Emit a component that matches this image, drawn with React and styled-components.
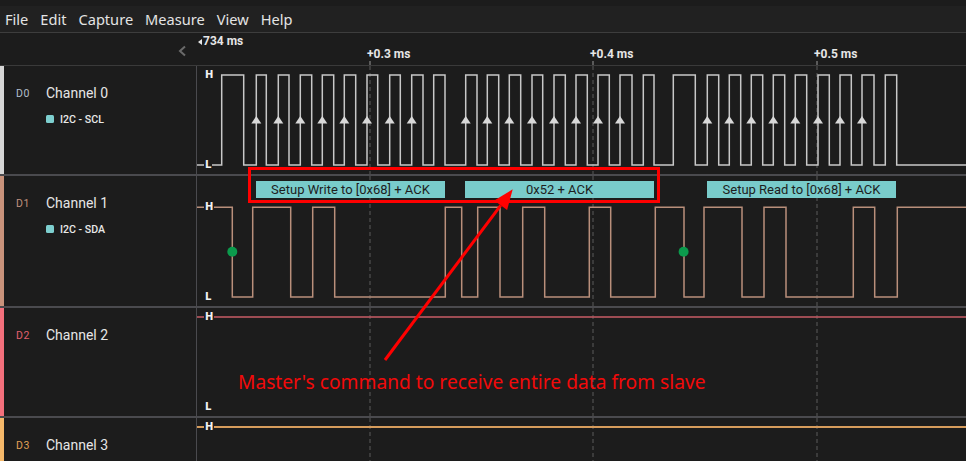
import React from "react";
import styled, { createGlobalStyle } from "styled-components";

const GlobalStyle = createGlobalStyle`
  html, body {
    margin: 0;
    padding: 0;
    background: #1c1c1c;
  }
  body {
    width: 966px;
    height: 461px;
    overflow: hidden;
    font-family: Roboto, "Noto Sans", sans-serif;
  }
`;

const Window = styled.div`
  width: 966px;
  height: 461px;
  display: flex;
  flex-direction: column;
  background: #1c1c1c;
  overflow: hidden;
`;

const MenuBar = styled.div`
  height: 26px;
  margin-top: 6px;
  display: flex;
  align-items: center;
  gap: 12px;
  padding-left: 5px;
  background: #212121;
  border-bottom: 1px solid #3d3d3d;
  font-family: "Noto Sans", sans-serif;
  font-size: 14.6px;
  color: #e4e4e4;
  flex-shrink: 0;
`;

const MenuItem = styled.span`
  line-height: 26px;
`;

const Ruler = styled.div`
  height: 32px;
  display: flex;
  border-bottom: 1px solid #3a3a3a;
  flex-shrink: 0;
`;

const RulerSide = styled.div`
  width: 197px;
  display: flex;
  justify-content: flex-end;
  align-items: center;
  padding: 4px 10px 0 0;
  box-sizing: border-box;
`;

const RulerTrack = styled.div`
  position: relative;
  flex: 1;
  font-weight: 700;
  font-size: 12px;
  color: #e6e6e6;
`;

const Offset = styled.div`
  position: absolute;
  left: 1px;
  top: 1px;
  display: flex;
  align-items: center;
  gap: 1px;
  line-height: 15px;
`;

const TickLabel = styled.span`
  position: absolute;
  top: 14px;
  line-height: 15px;
`;

const TickMark = styled.span`
  position: absolute;
  bottom: 0;
  width: 2px;
  height: 4px;
  background: #5a5a5a;
`;

const Channels = styled.div`
  position: relative;
  flex: 1;
  display: flex;
  flex-direction: column;
`;

const Row = styled.div`
  display: flex;
  height: ${(p) => p.$h}px;
  border-bottom: 2px solid #4a4a4e;
  flex-shrink: 0;
`;

const Label = styled.div`
  width: 180px;
  flex-shrink: 0;
  border-left: 4px solid ${(p) => p.$bar};
  border-right: 1px solid #4a4a4e;
  padding: 19px 0 0 12px;
`;

const Header = styled.div`
  display: flex;
  align-items: center;
  height: 16px;
`;

const ChannelId = styled.span`
  width: 30px;
  font-size: 10.5px;
  letter-spacing: 0.6px;
  color: ${(p) => p.$color};
`;

const ChannelName = styled.span`
  font-size: 14px;
  color: #e6e6e6;
`;

const Tag = styled.div`
  display: flex;
  align-items: center;
  margin: 12px 0 0 30px;
  height: 12px;
  font-size: 10.6px;
  font-weight: 500;
  color: #e8e8e8;
`;

const Chip = styled.span`
  width: 8px;
  height: 8px;
  border-radius: 1.5px;
  background: #7dcfcf;
  margin-right: 6px;
`;

const Wave = styled.div`
  position: relative;
  flex: 1;
  overflow: hidden;
`;

const WaveSvg = styled.svg`
  position: absolute;
  left: 0;
  top: 0;
`;

const Level = styled.span`
  position: absolute;
  left: 7px;
  font-family: "DejaVu Sans", sans-serif;
  font-size: 10px;
  font-weight: 700;
  line-height: 10px;
  padding: 0 1px;
  background: #1c1c1c;
  color: #f2f2f2;
`;

const Decode = styled.div`
  position: absolute;
  top: 5px;
  height: 17px;
  background: #79cccb;
  color: #1e1e1e;
  font-size: 13px;
  line-height: 17px;
  text-align: center;
`;

const RedBox = styled.div`
  position: absolute;
  left: 248px;
  top: 101px;
  width: 412px;
  height: 36px;
  border: 3px solid #ff0000;
  box-sizing: border-box;
`;

const Overlay = styled.svg`
  position: absolute;
  left: 0;
  top: 0;
  pointer-events: none;
`;

const Note = styled.span`
  position: absolute;
  left: 238px;
  top: 302px;
  font-family: "Noto Sans", sans-serif;
  font-size: 19.2px;
  color: #f20a0a;
  white-space: nowrap;
`;

const X0 = 197;
const W = 769;
const GRID = [370, 593, 817];

const wavePath = (edges, startHigh, hi, lo) => {
  let y = startHigh ? hi : lo;
  let d = `M${X0} ${y}`;
  edges.forEach((x) => {
    d += ` H${x}`;
    y = y === hi ? lo : hi;
    d += ` V${y}`;
  });
  return d + ` H${X0 + W}`;
};

const sclEdges = [
  221.7, 243.7, 256.3, 266.3, 278.3, 289, 300.3, 311.7, 322.3, 333.7, 344.3,
  355.7, 367, 377.7, 389.7, 400.3, 411.7, 423, 433.7, 445, 465.7, 477, 487.3,
  498.7, 509.3, 520.7, 532, 542.7, 554, 565.3, 576, 587.3, 598, 609.3, 620,
  632, 643.3, 654, 673.3, 695.3, 707.3, 718.7, 729.3, 740.7, 751.3, 762.7,
  773.3, 784.7, 795.3, 806.7, 818, 829.3, 840, 851.3, 862, 874, 885.3, 896.7,
];

const sclArrows = [
  256.3, 278.3, 300.3, 322.3, 344.3, 367, 389.7, 411.7, 465.7, 487.3, 509.3,
  532, 554, 576, 598, 620, 707.3, 729.3, 751.3, 773.3, 795.3, 818, 840, 862,
];

const sdaEdges = [
  232.3, 252.7, 290.7, 312.7, 334.7, 445.3, 461.7, 477.7, 500, 522.7, 544.7,
  589.3, 610.7, 655.3, 684, 704, 742, 764, 786, 853.3, 874.7, 897.3,
];

const decodes = [
  { left: 256, width: 189, text: "Setup Write to [0x68] + ACK" },
  { left: 465, width: 189, text: "0x52 + ACK" },
  { left: 707, width: 189, text: "Setup Read to [0x68] + ACK" },
];

const Grid = ({ h }) =>
  GRID.map((x) => (
    <line
      key={x}
      x1={x}
      x2={x}
      y1={0}
      y2={h}
      stroke="#464646"
      strokeWidth="1.5"
      strokeDasharray="4 3"
    />
  ));

const Channel = ({ id, name, color, bar, tag, h, levels, children, extra }) => (
  <Row $h={h}>
    <Label $bar={bar}>
      <Header>
        <ChannelId $color={color}>{id}</ChannelId>
        <ChannelName>{name}</ChannelName>
      </Header>
      {tag && (
        <Tag>
          <Chip />
          {tag}
        </Tag>
      )}
    </Label>
    <Wave>
      <WaveSvg width={W} height={h} viewBox={`${X0} 0 ${W} ${h}`}>
        <Grid h={h} />
        {children}
      </WaveSvg>
      {extra}
      {levels.map(([t, y]) => (
        <Level key={t} style={{ top: y - 5 }}>
          {t}
        </Level>
      ))}
    </Wave>
  </Row>
);

export default function App() {
  return (
    <Window>
      <GlobalStyle />
      <MenuBar>
        {["File", "Edit", "Capture", "Measure", "View", "Help"].map((m) => (
          <MenuItem key={m}>{m}</MenuItem>
        ))}
      </MenuBar>
      <Ruler>
        <RulerSide>
          <svg width="10" height="12" viewBox="0 0 10 12">
            <polyline
              points="8,1.5 3,6 8,10.5"
              fill="none"
              stroke="#6a6a6a"
              strokeWidth="2"
            />
          </svg>
        </RulerSide>
        <RulerTrack>
          <Offset>
            <svg width="4" height="6" viewBox="0 0 4 6">
              <polygon points="4,0 0,3 4,6" fill="#e6e6e6" />
            </svg>
            734 ms
          </Offset>
          {GRID.map((x, i) => (
            <React.Fragment key={x}>
              <TickLabel style={{ left: x - X0 - 3 }}>+0.{i + 3} ms</TickLabel>
              <TickMark style={{ left: x - X0 - 1 }} />
            </React.Fragment>
          ))}
        </RulerTrack>
      </Ruler>
      <Channels>
        <Channel
          id="D0"
          name="Channel 0"
          color="#b3bfcc"
          bar="#d6d6d6"
          tag="I2C - SCL"
          h={108}
          levels={[
            ["H", 9],
            ["L", 99],
          ]}
        >
          <path
            d={wavePath(sclEdges, false, 9, 99)}
            fill="none"
            stroke="#c8c8c8"
            strokeWidth="1.5"
          />
          {sclArrows.map((x) => (
            <polygon
              key={x}
              points={`${x},50 ${x - 5},57.5 ${x + 5},57.5`}
              fill="#d8d8d8"
            />
          ))}
        </Channel>
        <Channel
          id="D1"
          name="Channel 1"
          color="#c0927e"
          bar="#c8927b"
          tag="I2C - SDA"
          h={130}
          levels={[
            ["H", 31],
            ["L", 121],
          ]}
          extra={decodes.map((d) => (
            <Decode key={d.text} style={{ left: d.left - X0, width: d.width }}>
              {d.text}
            </Decode>
          ))}
        >
          <path
            d={wavePath(sdaEdges, true, 31.3, 121)}
            fill="none"
            stroke="#b98f7b"
            strokeWidth="1.5"
          />
          <circle cx="232.3" cy="75.7" r="5" fill="#0b9a4c" />
          <circle cx="683.6" cy="75.7" r="5" fill="#0b9a4c" />
        </Channel>
        <Channel
          id="D2"
          name="Channel 2"
          color="#e0606c"
          bar="#f3707c"
          h={108}
          levels={[
            ["H", 9],
            ["L", 99],
          ]}
        >
          <line x1={X0} x2={X0 + W} y1="9" y2="9" stroke="#c85c66" strokeWidth="1.5" />
        </Channel>
        <Channel
          id="D3"
          name="Channel 3"
          color="#e0a055"
          bar="#f5b86a"
          h={108}
          levels={[["H", 9]]}
        >
          <line x1={X0} x2={X0 + W} y1="9" y2="9" stroke="#d69c5c" strokeWidth="2" />
        </Channel>

        <RedBox />
        <Overlay width="966" height="395" viewBox="0 0 966 395">
          <line x1="385" y1="294" x2="500.7" y2="139.3" stroke="#ff0000" strokeWidth="3" />
          <polygon points="512.7,123.3 507.1,144.1 494.3,134.5" fill="#ff0000" />
        </Overlay>
        <Note>Master's command to receive entire data from slave</Note>
      </Channels>
    </Window>
  );
}
